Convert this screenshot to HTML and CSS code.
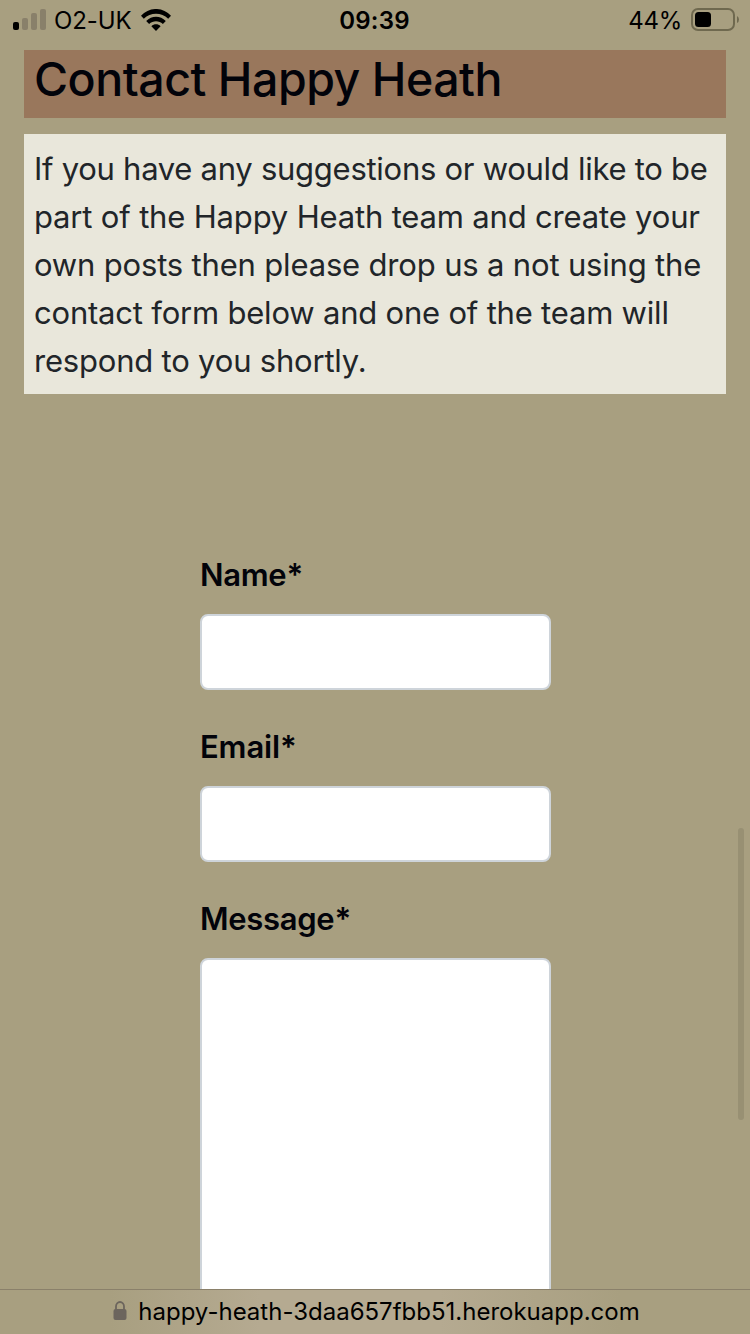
FILE: index.html
```html
<!DOCTYPE html>
<html lang="en">
<head>
<meta charset="utf-8">
<title>Contact Happy Heath</title>
<link rel="stylesheet" href="styles.css">
</head>
<body>
<div class="screen">
  <header class="status">
    <div class="status-left">
      <svg class="signal" width="34" height="22" viewBox="0 0 34 22">
        <rect x="0" y="13" width="6" height="8" rx="2"/>
        <g fill="#89806a"><rect x="9" y="9" width="6" height="12" rx="2"/><rect x="18" y="4" width="6" height="17" rx="2"/><rect x="27" y="0" width="6" height="21" rx="2"/></g>
      </svg>
      <span class="carrier">O2-UK</span>
      <svg class="wifi" width="30" height="22" viewBox="0 0 30 22">
        <path d="M0 6.800C8-2.300 22-2.300 30 6.800L27.200 9.700C20.500 3 9.500 3 2.800 9.700Z"/>
        <path d="M5.200 12C10.600 6.200 19.400 6.200 24.800 12L21.900 14.900C18 11.200 12 11.200 8.100 14.900Z"/>
        <path d="M10.400 17.200C13 14.700 17 14.700 19.600 17.200L15 22Z"/>
      </svg>
    </div>
    <span class="time">09:39</span>
    <div class="status-right">
      <span class="percent">44%</span>
      <svg class="battery" width="48" height="24" viewBox="0 0 48 24">
        <rect x="1" y="1" width="42" height="21" rx="6" fill="none" stroke="#6f694f" stroke-width="2"/>
        <rect x="4" y="4" width="16" height="15" rx="3.500"/>
        <path d="M46 8Q48 9 48 11.500T46 15Z" fill="#6f694f"/>
      </svg>
    </div>
  </header>
  <main class="page">
    <h1 class="title">Contact Happy Heath</h1>
    <p class="intro">
      <span class="line l1">If you have any suggestions or would like to be</span>
      <span class="line">part of the Happy Heath team and create your</span>
      <span class="line">own posts then please drop us a not using the</span>
      <span class="line l4">contact form below and one of the team will</span>
      <span class="line l4">respond to you shortly.</span>
    </p>
    <form class="form">
      <label class="label" for="name">Name*</label>
      <input class="field" id="name" type="text">
      <label class="label label-email" for="email">Email*</label>
      <input class="field" id="email" type="email">
      <label class="label" for="message">Message*</label>
      <textarea class="field message" id="message"></textarea>
    </form>
  </main>
  <footer class="address">
    <svg class="lock" width="14" height="20" viewBox="0 0 14 20">
      <path d="M3 9V5.500a4 4.500 0 0 1 8 0V9" fill="none" stroke="#6c655d" stroke-width="1.800"/>
      <rect x="0.500" y="8" width="13" height="11" rx="2" fill="#6c655d"/>
    </svg>
    <span class="url">happy-heath-3daa657fbb51.herokuapp.com</span>
  </footer>
  <div class="scrollbar"></div>
</div>
</body>
</html>
```
FILE: styles.css
```css
* { box-sizing: border-box; }
body { margin: 0; font-family: Inter, "Liberation Sans", sans-serif; background: #a89f80; }
.screen { position: relative; display: flex; flex-direction: column; height: 1334px; overflow: hidden; background: #a89f80; color: #000; }
.status { display: grid; grid-template-columns: 1fr auto 1fr; align-items: center; flex: none; height: 50px; padding: 0 11px 10px 13px; font-size: 24px; line-height: 40px; }
.status-left, .status-right { display: flex; align-items: center; }
.status-right { justify-content: flex-end; }
.signal { margin-right: 7px; }
.carrier { margin-right: 9px; padding-top: 2px; line-height: 38px; letter-spacing: -0.1px; }
.time { margin-right: 3px; padding-top: 2px; line-height: 38px; font-weight: 600; letter-spacing: 0.2px; }
.percent { margin-right: 9px; padding-top: 2px; line-height: 38px; letter-spacing: -0.3px; }
.page { flex: 1; min-height: 0; overflow: hidden; padding: 0 24px; }
.title { height: 68px; margin: 0 0 16px; padding: 0 10px; background: #99775c; color: #02030a; font-size: 46.5px; font-weight: 500; line-height: 58px; letter-spacing: -0.480px; white-space: nowrap; }
.intro { height: 260px; margin: 0; padding: 11px 10px 9px; background: #e9e7db; color: #212529; font-size: 31px; line-height: 48px; }
.line { display: block; white-space: nowrap; letter-spacing: -0.170px; }
.l1 { letter-spacing: -0.270px; }
.l4 { letter-spacing: -0.200px; }
.form { display: flex; flex-direction: column; width: 351px; margin: 157px auto 0 176px; }
.label { height: 48px; margin-bottom: 15px; color: #02030a; font-size: 31px; font-weight: 600; line-height: 48px; letter-spacing: -0.300px; }
.label-email { letter-spacing: -0.150px; }
.field { flex: none; width: 351px; height: 76px; margin: 0 0 33px; border: 2px solid #ced4da; border-radius: 8px; background: #fff; outline: none; resize: none; }
.message { height: 480px; }
.address { display: flex; flex: none; align-items: center; justify-content: center; gap: 11px; height: 45px; padding: 0 0 2px 3px; border-top: 1px solid #8a806a; background: linear-gradient(90deg, #a89f80 110px, #b5aa91 260px, #b5aa91 440px, #a89f80 620px); font-size: 24px; }
.scrollbar { position: absolute; top: 828px; left: 738px; width: 6px; height: 292px; border-radius: 3px; background: #989073; }
```
